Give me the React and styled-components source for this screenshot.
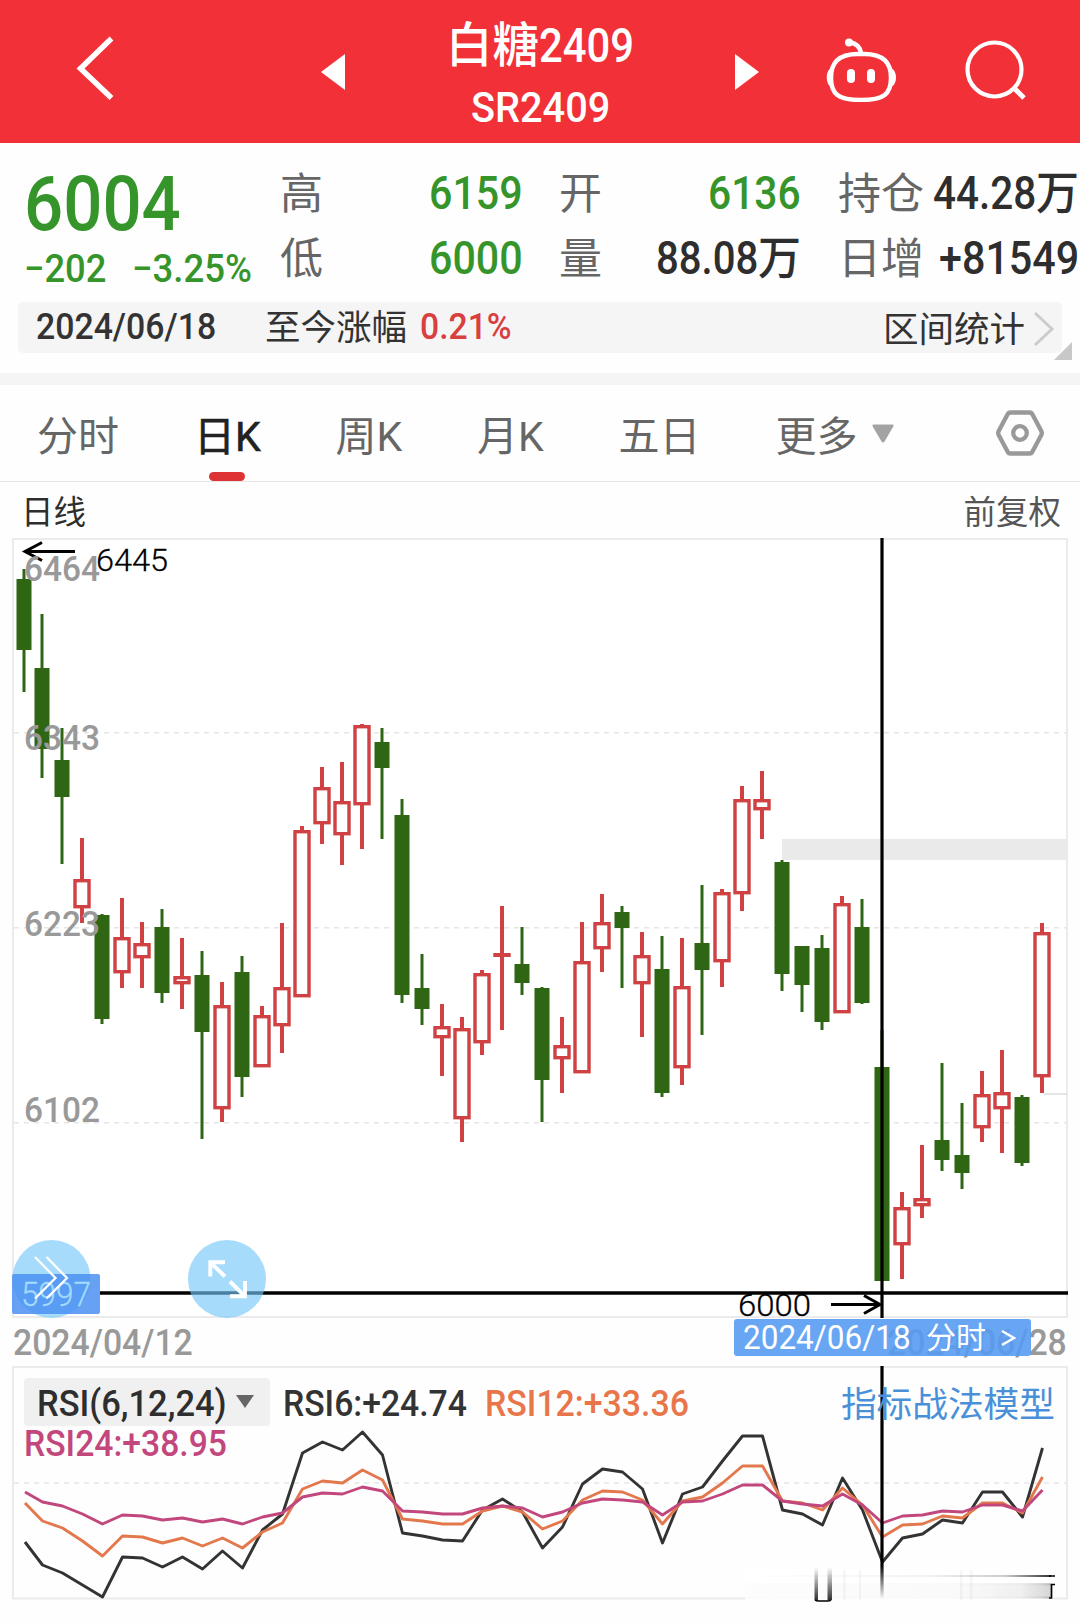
import { useLayoutEffect, useRef, useState } from "react";
import styled, { createGlobalStyle } from "styled-components";

const GREEN = "#2f6613";
const RED = "#cf4142";

// [kind, high, bodyTop, bodyBottom, low], in chart space
const candles = [
  ["d", 569, 579, 650, 692],
  ["d", 614, 668, 749, 778],
  ["d", 728, 760, 797, 864],
  ["u", 838, 879, 908, 923],
  ["d", 914, 915, 1019, 1024],
  ["u", 898, 937, 973, 988],
  ["u", 922, 943, 958, 988],
  ["d", 909, 927, 993, 1003],
  ["u", 938, 976, 984, 1009],
  ["d", 951, 975, 1032, 1139],
  ["u", 982, 1005, 1109, 1122],
  ["d", 956, 972, 1077, 1097],
  ["u", 1006, 1015, 1067, 1067],
  ["u", 923, 987, 1026, 1053],
  ["u", 826, 830, 997, 997],
  ["u", 767, 787, 824, 844],
  ["u", 762, 801, 835, 865],
  ["u", 724, 725, 805, 849],
  ["d", 728, 742, 768, 839],
  ["d", 799, 815, 995, 1003],
  ["d", 954, 988, 1009, 1025],
  ["u", 1004, 1026, 1038, 1076],
  ["u", 1017, 1028, 1119, 1142],
  ["u", 970, 973, 1043, 1055],
  ["u", 906, 953, 957, 1030],
  ["d", 927, 964, 983, 995],
  ["d", 987, 988, 1080, 1122],
  ["u", 1017, 1045, 1059, 1093],
  ["u", 922, 961, 1073, 1073],
  ["u", 894, 922, 949, 972],
  ["d", 906, 912, 928, 988],
  ["u", 932, 955, 984, 1037],
  ["d", 936, 969, 1093, 1097],
  ["u", 938, 986, 1068, 1085],
  ["d", 885, 943, 970, 1035],
  ["u", 889, 892, 962, 987],
  ["u", 786, 799, 894, 911],
  ["u", 771, 799, 810, 839],
  ["d", 860, 862, 974, 991],
  ["d", 946, 946, 985, 1012],
  ["d", 935, 948, 1022, 1030],
  ["u", 896, 903, 1013, 1013],
  ["d", 899, 927, 1003, 1004],
  ["d", 1030, 1067, 1281, 1281],
  ["u", 1192, 1207, 1245, 1279],
  ["u", 1145, 1198, 1206, 1218],
  ["d", 1063, 1140, 1160, 1171],
  ["d", 1103, 1155, 1173, 1189],
  ["u", 1071, 1094, 1128, 1142],
  ["u", 1050, 1092, 1109, 1153],
  ["d", 1095, 1097, 1163, 1166],
  ["u", 923, 932, 1077, 1093],
];

const rsi6 = [
  1542, 1565, 1573, 1585, 1597, 1557, 1558, 1567, 1557, 1569, 1551, 1568, 1530,
  1514, 1453, 1442, 1450, 1432, 1455, 1533, 1536, 1540, 1541, 1510, 1499, 1512,
  1548, 1527, 1484, 1469, 1472, 1489, 1543, 1494, 1487, 1461, 1436, 1436, 1510,
  1514, 1525, 1478, 1510, 1562, 1538, 1534, 1520, 1523, 1492, 1492, 1517, 1448,
];
const rsi12 = [
  1503, 1521, 1528, 1541, 1556, 1536, 1537, 1543, 1538, 1546, 1538, 1548, 1532,
  1523, 1489, 1481, 1483, 1470, 1480, 1519, 1521, 1524, 1524, 1511, 1506, 1512,
  1529, 1521, 1500, 1491, 1492, 1500, 1524, 1501, 1497, 1483, 1466, 1466, 1501,
  1503, 1510, 1488, 1505, 1537, 1525, 1524, 1516, 1518, 1503, 1503, 1513, 1477,
];
const rsi24 = [
  1492, 1502, 1506, 1514, 1524, 1515, 1516, 1520, 1518, 1522, 1519, 1524, 1517,
  1513, 1497, 1493, 1494, 1487, 1491, 1511, 1512, 1514, 1514, 1508, 1506, 1508,
  1517, 1512, 1503, 1499, 1500, 1502, 1515, 1502, 1501, 1494, 1485, 1485, 1501,
  1504, 1506, 1494, 1505, 1523, 1516, 1515, 1511, 1512, 1505, 1505, 1511, 1490,
];

const candleX = (i) => (i === 0 ? 24 : 22 + i * 20);

const toPoints = (series) =>
  series.map((y, i) => `${i === 0 ? 25 : candleX(i) + 0.5},${y}`).join(" ");

// Condenses its text to a given advance width, as a narrow numeral face would
const Fit = ({ w, children, ...rest }) => {
  const ref = useRef(null);
  const [scale, setScale] = useState(1);
  useLayoutEffect(() => {
    setScale(w / ref.current.offsetWidth);
  }, [w]);
  return (
    <FitBox $w={w} {...rest}>
      <FitInner ref={ref} style={{ transform: `scaleX(${scale})` }}>
        {children}
      </FitInner>
    </FitBox>
  );
};

const Candle = ({ index, data }) => {
  const [kind, high, top, bottom, low] = data;
  const x = candleX(index);
  if (kind === "d") {
    return (
      <g fill={GREEN}>
        <rect x={x - 1.5} y={high} width="3" height={low - high} />
        <rect x={x - 7.5} y={top} width="15" height={bottom - top} />
      </g>
    );
  }
  return (
    <g fill={RED}>
      <rect x={x - 2} y={high} width="4" height={top - high} />
      <rect x={x - 2} y={bottom} width="4" height={low - bottom} />
      {bottom - top < 5 ? (
        <rect x={x - 8.7} y={top} width="17.4" height={bottom - top} />
      ) : (
        <rect
          x={x - 7}
          y={top + 1.7}
          width="14"
          height={bottom - top - 3}
          fill="#fff"
          stroke={RED}
          strokeWidth="3.4"
        />
      )}
    </g>
  );
};

const AxisLabel = ({ y, children }) => (
  <text
    x="24"
    y={y}
    textLength="76"
    lengthAdjust="spacingAndGlyphs"
    fontSize="35.5"
    fontWeight="500"
    fill="#999"
  >
    {children}
  </text>
);

const Header = () => (
  <HeaderBar>
    <BackIcon width="38" height="68" viewBox="75 34 38 68">
      <path d="M110.500 38.500L79.500 68.500L110.500 98" fill="none" stroke="#fff" strokeWidth="5.500" />
    </BackIcon>
    <svg width="24" height="36" viewBox="0 0 24 36">
      <path d="M24 0V36L0 18Z" fill="#fff" />
    </svg>
    <Titles>
      <TitleLine $size={48} $height={52}>
        <Fit w={93}>白糖</Fit>
        <Fit w={95}>2409</Fit>
      </TitleLine>
      <TitleLine $size={42} $height={71}>
        <Fit w={139}>SR2409</Fit>
      </TitleLine>
    </Titles>
    <svg width="24" height="36" viewBox="0 0 24 36">
      <path d="M0 0V36L24 18Z" fill="#fff" />
    </svg>
    <RobotIcon width="70" height="64" viewBox="826 38 70 64">
      <g fill="none" stroke="#fff" strokeWidth="4.500" strokeLinecap="round">
        <path d="M861 54C885 53 891 64 891 78C891 94 884 100 861 100C838 100 831 94 831 78C831 64 837 53 861 54Z" />
        <path d="M861 53C860 46 855 43 849 42" />
      </g>
      <circle cx="849" cy="42.500" r="4" fill="#fff" />
      <path d="M832 68C825 69 825 86 832 87ZM890 68C898 69 898 86 890 87Z" fill="#fff" />
      <rect x="847" y="69" width="8" height="14" rx="4" fill="#fff" />
      <rect x="867" y="69" width="8" height="14" rx="4" fill="#fff" />
    </RobotIcon>
    <SearchIcon width="62" height="62" viewBox="965 40 62 62">
      <circle cx="994.500" cy="69.500" r="27" fill="none" stroke="#fff" strokeWidth="4.200" />
      <path d="M1014 88L1024 98" stroke="#fff" strokeWidth="5" />
    </SearchIcon>
  </HeaderBar>
);

const Quote = () => (
  <QuotePanel>
    <QuoteTop>
      <PriceBlock>
        <Price>
          <Fit w={157}>6004</Fit>
        </Price>
        <Change>
          <Fit w={82}>−202</Fit>
          <Fit w={120}>−3.25%</Fit>
        </Change>
      </PriceBlock>
      <Stats $width={243}>
        <Stat>
          <Label>高</Label>
          <Value $color="#36952a">
            <Fit w={94}>6159</Fit>
          </Value>
        </Stat>
        <Stat>
          <Label>低</Label>
          <Value $color="#36952a">
            <Fit w={94}>6000</Fit>
          </Value>
        </Stat>
      </Stats>
      <Stats $width={242}>
        <Stat>
          <Label>开</Label>
          <Value $color="#36952a">
            <Fit w={93}>6136</Fit>
          </Value>
        </Stat>
        <Stat>
          <Label>量</Label>
          <Value>
            <Fit w={102}>88.08</Fit>
            <Fit w={43}>万</Fit>
          </Value>
        </Stat>
      </Stats>
      <Stats $width={241}>
        <Stat>
          <Label>持仓</Label>
          <Value>
            <Fit w={103}>44.28</Fit>
            <Fit w={43}>万</Fit>
          </Value>
        </Stat>
        <Stat>
          <Label>日增</Label>
          <Value>
            <Fit w={140}>+81549</Fit>
          </Value>
        </Stat>
      </Stats>
    </QuoteTop>
    <RangeBar>
      <RangeDate>
        <Fit w={180}>2024/06/18</Fit>
      </RangeDate>
      <RangeText>至今涨幅</RangeText>
      <RangeRate>
        <Fit w={92}>0.21%</Fit>
      </RangeRate>
      <RangeLink>
        区间统计
        <svg width="24" height="38" viewBox="0 0 24 38">
          <path d="M3 2L20 18L3 34" fill="none" stroke="#ccc" strokeWidth="3" />
        </svg>
      </RangeLink>
      <Corner width="18" height="18" viewBox="0 0 18 18">
        <path d="M18 0V18H0Z" fill="#c8c8c8" />
      </Corner>
    </RangeBar>
  </QuotePanel>
);

const Tabs = () => (
  <TabBar>
    <Tab $width={82}>分时</Tab>
    <Tab $width={68} $active>
      日K
    </Tab>
    <Tab $width={68}>周K</Tab>
    <Tab $width={68}>月K</Tab>
    <Tab $width={82}>五日</Tab>
    <Tab $width={82}>更多</Tab>
    <MoreArrow width="22" height="19" viewBox="0 0 22 19">
      <path d="M1.500 .500H20.500Q22 .500 21.300 2.500L12.500 17.500Q11 19.500 9.500 17.500L.700 2.500Q0 .500 1.500 .500Z" fill="#a3a3a3" />
    </MoreArrow>
    <SettingsIcon width="50" height="48" viewBox="0 0 50 48">
      <path
        d="M15.500 3.500H34.500Q36.500 3.500 37.500 5.500L46.300 22Q47.300 24 46.300 26L37.500 42.500Q36.500 44.500 34.500 44.500H15.500Q13.500 44.500 12.500 42.500L3.700 26Q2.700 24 3.700 22L12.500 5.500Q13.500 3.500 15.500 3.500Z"
        fill="none"
        stroke="#999"
        strokeWidth="4.300"
      />
      <circle cx="25" cy="24" r="6.800" fill="none" stroke="#999" strokeWidth="4.300" />
    </SettingsIcon>
  </TabBar>
);

const KChart = () => (
  <ChartSvg width="1080" height="780" viewBox="0 538 1080 780">
    <rect x="13" y="539" width="1054" height="778" fill="#fff" stroke="#ebebeb" strokeWidth="2" />
    <g stroke="#e6e6e6" strokeWidth="1.500" strokeDasharray="5 5">
      <path d="M14 732.700H1066" />
      <path d="M14 927.700H1066" />
      <path d="M14 1122.700H1066" />
    </g>
    <rect x="782" y="839" width="286" height="21" fill="#eaeaea" />
    <path d="M1044 1094H1067" stroke="#ddd" strokeWidth="1.500" />
    {candles.map((data, i) => (
      <Candle key={i} index={i} data={data} />
    ))}
    <g fill="none" stroke="#000" strokeWidth="3">
      <path d="M75 551.500H25M42 542.500L25 551.500L42 560.500" />
      <path d="M831 1304.500H880M864 1295.500L880 1304.500L864 1313.500" />
    </g>
    <AxisLabel y={581}>6464</AxisLabel>
    <AxisLabel y={750}>6343</AxisLabel>
    <AxisLabel y={936}>6223</AxisLabel>
    <AxisLabel y={1122}>6102</AxisLabel>
    <g fontSize="31.500" fontWeight="300" fill="#000" stroke="#000" strokeWidth=".3">
      <text x="96" y="570.500" textLength="72" lengthAdjust="spacingAndGlyphs">
        6445
      </text>
      <text x="738" y="1315.500" textLength="73" lengthAdjust="spacingAndGlyphs">
        6000
      </text>
    </g>
    <path d="M882 538V1318" stroke="#000" strokeWidth="3.200" />
    <path d="M100 1293H1068" stroke="#000" strokeWidth="3.700" />
    <circle cx="51.500" cy="1279" r="39" fill="rgba(115, 198, 248, .64)" />
    <rect x="12" y="1274" width="88" height="40" rx="2" fill="rgba(77, 145, 242, .86)" />
    <text
      x="21"
      y="1306"
      fontSize="33"
      fontWeight="300"
      textLength="70"
      lengthAdjust="spacingAndGlyphs"
      fill="#a2dbfb"
      stroke="#a2dbfb"
      strokeWidth=".3"
    >
      5997
    </text>
    <circle cx="227" cy="1279" r="39" fill="rgba(115, 198, 248, .64)" />
    <g fill="none" stroke="#fff" strokeWidth="2.300">
      <path d="M35 1257L55.500 1278L35 1298.500" />
      <path d="M46.500 1257L67 1278L46.500 1298.500" />
    </g>
    <g fill="none" stroke="#fff" strokeWidth="3.900">
      <path d="M225 1262.300H210.300V1276.500M210.300 1262.300L225 1276.500" />
      <path d="M245 1281V1296.300H230M245 1296.300L230 1281.500" />
    </g>
  </ChartSvg>
);

const RsiPanel = () => (
  <RsiSection>
    <RsiSvg width="1080" height="236" viewBox="0 1366 1080 236">
      <defs>
        <linearGradient id="fadeDown" x1="0" y1="0" x2="0" y2="1">
          <stop offset="0" stopColor="#000" stopOpacity="0" />
          <stop offset="1" stopColor="#000" stopOpacity=".8" />
        </linearGradient>
        <linearGradient id="fadeUp" x1="0" y1="0" x2="0" y2="1">
          <stop offset="0" stopColor="#000" />
          <stop offset="1" stopColor="#000" stopOpacity="0" />
        </linearGradient>
        <linearGradient id="fadeRight">
          <stop offset="0" stopColor="#000" stopOpacity="0" />
          <stop offset=".600" stopColor="#000" stopOpacity=".05" />
          <stop offset=".850" stopColor="#000" stopOpacity=".2" />
          <stop offset="1" stopColor="#000" stopOpacity=".8" />
        </linearGradient>
        <linearGradient id="haze">
          <stop offset="0" stopColor="#000" stopOpacity=".01" />
          <stop offset=".700" stopColor="#000" stopOpacity=".02" />
          <stop offset=".900" stopColor="#000" stopOpacity=".06" />
          <stop offset="1" stopColor="#000" stopOpacity=".16" />
        </linearGradient>
      </defs>
      <rect x="13" y="1367" width="1054" height="231.500" fill="none" stroke="#ebebeb" strokeWidth="2" />
      <path d="M14 1483H1066" stroke="#e6e6e6" strokeWidth="1.500" strokeDasharray="5 5" />
      <g fill="none" strokeWidth="2.900" strokeLinejoin="round">
        <polyline points={toPoints(rsi6)} stroke="#333" />
        <polyline points={toPoints(rsi12)} stroke="#e2784b" />
        <polyline points={toPoints(rsi24)} stroke="#c2477c" />
      </g>
      <rect x="745" y="1569" width="308" height="31" fill="#fff" opacity=".9" />
      <rect x="745" y="1575" width="306" height="2" fill="url(#fadeRight)" />
      <rect x="745" y="1583" width="306" height="15.500" fill="url(#haze)" />
      <rect x="960" y="1583.500" width="92" height="2" fill="url(#haze)" />
      <rect x="960" y="1596.500" width="90" height="2" fill="url(#haze)" />
      <g fill="#000" opacity=".03">
        <rect x="843" y="1570" width="2.500" height="30" />
        <rect x="859" y="1570" width="2" height="30" />
        <rect x="960" y="1570" width="2.500" height="30" />
        <rect x="970" y="1570" width="2.500" height="30" />
      </g>
      <rect x="814.500" y="1567" width="3.500" height="33" fill="url(#fadeDown)" />
      <rect x="827.500" y="1567" width="4.500" height="33" fill="url(#fadeDown)" />
      <path d="M815 1600Q816 1601 819 1601H827Q830 1601 831 1600" fill="none" stroke="#000" strokeWidth="1.500" />
      <path d="M1049 1576H1055M1055 1584.500H1051.500V1598H1049" fill="none" stroke="#000" strokeWidth="1.700" />
      <path d="M882 1366V1565" stroke="#000" strokeWidth="3.200" />
      <rect x="880.400" y="1565" width="3.200" height="34" fill="url(#fadeUp)" />
    </RsiSvg>
    <Legend>
      <Picker>
        <Fit w={190}>RSI(6,12,24)</Fit>
        <svg width="18" height="13" viewBox="0 0 18 13">
          <path d="M0 0H18L9 13Z" fill="#666" />
        </svg>
      </Picker>
      <LegendItem $color="#333">
        <Fit w={184}>RSI6:+24.74</Fit>
      </LegendItem>
      <LegendItem $color="#e9764a">
        <Fit w={204}>RSI12:+33.36</Fit>
      </LegendItem>
      <ModelLink>指标战法模型</ModelLink>
    </Legend>
    <LegendItem $color="#c2477c">
      <Fit w={203}>RSI24:+38.95</Fit>
    </LegendItem>
  </RsiSection>
);

const App = () => (
  <>
    <GlobalStyle />
    <Screen>
      <Header />
      <Quote />
      <Tabs />
      <SubHeader>
        <SubTitle>日线</SubTitle>
        <SubOption>前复权</SubOption>
      </SubHeader>
      <KChart />
      <DateAxis>
        <Fit w={180}>2024/04/12</Fit>
        <Fit w={180}>2024/06/28</Fit>
        <DateTag>
          <Fit w={168}>2024/06/18</Fit>
          <span>分时</span>
          <svg width="15" height="18" viewBox="0 0 15 18">
            <path d="M1 2L13 9L1 16" fill="none" stroke="#fff" strokeWidth="2.600" />
          </svg>
        </DateTag>
      </DateAxis>
      <RsiPanel />
    </Screen>
  </>
);

export default App;

const GlobalStyle = createGlobalStyle`
  body {
    margin: 0;
    background: #fff;
    font-family: Roboto, "Noto Sans CJK SC", sans-serif;
  }
`;

const Screen = styled.div`
  width: 1080px;
  height: 1624px;
  overflow: hidden;
  background: #fefefe;
`;

const FitBox = styled.span`
  display: inline-block;
  flex: none;
  width: ${({ $w }) => $w}px;
  white-space: nowrap;
`;

const FitInner = styled.span`
  display: inline-block;
  transform-origin: left center;
`;

const HeaderBar = styled.header`
  display: flex;
  align-items: center;
  box-sizing: border-box;
  height: 143px;
  padding-left: 76px;
  background: #f23037;
`;

const BackIcon = styled.svg`
  margin: 0 207px 7px 0;
`;

const RobotIcon = styled.svg`
  margin: 0 69px 3px 67px;
`;

const SearchIcon = styled.svg`
  margin-bottom: 1px;
`;

const Titles = styled.div`
  align-self: flex-start;
  width: 390px;
  padding-top: 20px;
`;

const TitleLine = styled.div`
  display: flex;
  justify-content: center;
  height: ${({ $height }) => $height}px;
  line-height: ${({ $height }) => $height}px;
  font-size: ${({ $size }) => $size}px;
  font-weight: 500;
  color: #fff;
`;

const QuotePanel = styled.section`
  box-sizing: border-box;
  height: 242px;
  border-bottom: 12px solid #f5f5f5;
`;

const QuoteTop = styled.div`
  display: grid;
  grid-template-columns: 280px 279px 279px 242px;
  height: 159px;
`;

const PriceBlock = styled.div`
  padding: 30px 0 0 24px;
  color: #36952a;
  white-space: nowrap;
`;

const Price = styled.div`
  font-size: 76px;
  font-weight: 500;
  line-height: 62px;
`;

const Change = styled.div`
  display: flex;
  gap: 26px;
  margin-top: 14px;
  font-size: 39px;
  font-weight: 500;
  line-height: 40px;
`;

const Stats = styled.div`
  width: ${({ $width }) => $width}px;
  padding-top: 18px;
`;

const Stat = styled.div`
  display: flex;
  justify-content: space-between;
  height: 65px;
  line-height: 65px;
`;

const Label = styled.span`
  padding-top: 1px;
  font-size: 43px;
  color: #666;
`;

const Value = styled.span`
  display: flex;
  font-size: 46px;
  font-weight: 500;
  color: ${({ $color }) => $color || "#2e2e2e"};
`;

const RangeBar = styled.div`
  position: relative;
  display: flex;
  box-sizing: border-box;
  height: 51px;
  margin: 0 18px;
  padding: 0 6px 0 18px;
  border-radius: 5px;
  line-height: 50px;
  font-size: 35.5px;
  background: #f5f5f5;
  color: #333;
`;

const RangeDate = styled.span`
  width: 229px;
  font-size: 37px;
  font-weight: 500;
`;

const RangeText = styled.span`
  width: 155px;
  padding-top: 1px;
`;

const RangeRate = styled.span`
  font-size: 37px;
  font-weight: 500;
  color: #d8403f;
`;

const RangeLink = styled.span`
  display: flex;
  align-items: center;
  gap: 7px;
  margin-left: auto;
  padding-top: 5px;
`;

const Corner = styled.svg`
  position: absolute;
  right: -10px;
  bottom: -7px;
`;

const TabBar = styled.nav`
  display: flex;
  box-sizing: border-box;
  height: 97px;
  border-bottom: 1px solid #e6e6e6;
  padding-left: 37px;
`;

const Tab = styled.span`
  position: relative;
  flex: none;
  width: ${({ $width }) => $width}px;
  height: 96px;
  margin-right: ${({ $width }) => ($width === 82 ? 75 : 73.5)}px;
  font-size: 41px;
  line-height: 104px;
  white-space: nowrap;
  color: ${({ $active }) => ($active ? "#222" : "#666")};
  -webkit-text-stroke: ${({ $active }) => ($active ? "0.6px #222" : "0")};

  &::after {
    content: "";
    display: ${({ $active }) => ($active ? "block" : "none")};
    position: absolute;
    left: 15px;
    bottom: 0;
    width: 36px;
    height: 9px;
    border-radius: 4.5px;
    background: #de3335;
  }
`;

const MoreArrow = styled.svg`
  flex: none;
  margin: 39px 0 0 -61px;
`;

const SettingsIcon = styled.svg`
  flex: none;
  margin: 24px 0 0 101px;
`;

const SubHeader = styled.div`
  display: flex;
  justify-content: space-between;
  height: 56px;
  padding: 0 19px 0 21px;
  line-height: 62px;
  font-size: 32.5px;
`;

const SubTitle = styled.span`
  color: #2e2e2e;
`;

const SubOption = styled.span`
  color: #555;
`;

const ChartSvg = styled.svg`
  display: block;
`;

const DateAxis = styled.div`
  position: relative;
  display: flex;
  justify-content: space-between;
  height: 48px;
  padding: 0 13px;
  font-size: 36px;
  font-weight: 500;
  line-height: 51px;
  color: #999;
`;

const DateTag = styled.div`
  position: absolute;
  top: 1px;
  left: 734px;
  display: flex;
  align-items: center;
  gap: 15px;
  box-sizing: border-box;
  width: 297px;
  height: 37px;
  padding-left: 9px;
  border-radius: 3px;
  font-size: 30px;
  font-weight: 400;
  line-height: 38px;
  background: rgba(85, 155, 243, 0.89);
  color: #fff;

  ${FitBox} {
    font-size: 33px;
  }
`;

const RsiSection = styled.section`
  position: relative;
  height: 236px;
  padding: 0 24px;
`;

const RsiSvg = styled.svg`
  position: absolute;
  left: 0;
  top: 0;
`;

const Legend = styled.div`
  position: relative;
  display: flex;
  height: 60px;
`;

const Picker = styled.div`
  display: flex;
  align-items: center;
  gap: 9px;
  box-sizing: border-box;
  width: 246px;
  height: 48px;
  margin: 12px 13px 0 0;
  padding: 3px 0 0 13px;
  border-radius: 4px;
  font-size: 37px;
  font-weight: 500;
  background: #f0f0f0;
  color: #2e2e2e;

  svg {
    margin-top: -4px;
  }
`;

const LegendItem = styled.span`
  position: relative;
  margin-right: 18px;
  font-size: 37px;
  font-weight: 500;
  line-height: 75px;
  color: ${({ $color }) => $color};

  ${Legend} + & {
    display: block;
    line-height: 36px;
  }
`;

const ModelLink = styled.span`
  margin-left: auto;
  padding-right: 1px;
  font-size: 35.7px;
  line-height: 79px;
  color: #4a90d9;
`;
